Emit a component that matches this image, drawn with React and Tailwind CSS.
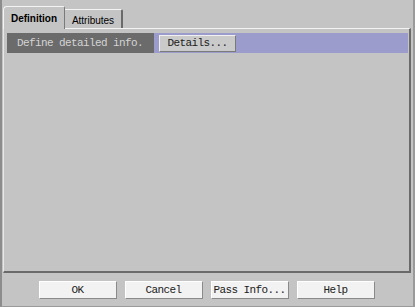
import React from "react";

const mono = { fontFamily: '"Liberation Mono", "DejaVu Sans Mono", monospace' };

function Btn({ children, className = "" }) {
  return (
    <button
      className={`h-[18px] flex items-center justify-center text-[11px] tracking-[-0.6px] text-[#202020] bg-[#f2f2f2] border border-t-[#ffffff] border-l-[#ffffff] border-r-[#8a8a8a] border-b-[#8a8a8a] ${className}`}
      style={mono}
    >
      {children}
    </button>
  );
}

export default function App() {
  return (
    <div
      className="w-[415px] h-[307px] bg-[#c4c4c4] border-l-2 border-l-[#8c8c8c] border-r-2 border-r-[#9a9a9a] border-b border-b-[#9a9a9a] flex flex-col"
      style={{ fontFamily: '"Liberation Sans", Arial, sans-serif' }}
    >
      {/* tabs */}
      <div className="flex items-end h-[28px] pl-[1px]">
        <div className="h-[23px] w-[62px] flex items-center justify-center pt-[1px] text-[10px] font-bold text-black bg-[#c4c4c4] border-t border-l border-t-[#f4f4f4] border-l-[#f4f4f4] border-r border-r-[#7a7a7a] rounded-tl-[4px] rounded-tr-[2px] relative z-10 -mb-px">
          Definition
        </div>
        <div className="h-[19px] w-[58px] flex items-center justify-center pt-[2px] text-[10px] text-black bg-[#c4c4c4] border-t border-t-[#f4f4f4] border-r-2 border-r-[#6a6a6a] rounded-tr-[2px]">
          Attributes
        </div>
      </div>

      {/* panel */}
      <div className="ml-[1px] mr-[2px] h-[245px] border-t border-l border-t-[#f4f4f4] border-l-[#e8e8e8] border-r-2 border-r-[#6a6a6a] border-b-2 border-b-[#6a6a6a] pt-[4px] pl-[3px] pr-[1px]">
        <div className="h-[20px] flex">
          <div
            className="w-[147px] bg-[#6b6b6b] text-[#d4d4d4] text-[11px] tracking-[-0.6px] flex items-center pl-[10px]"
            style={mono}
          >
            Define detailed info.
          </div>
          <div className="flex-1 bg-[#9c9ccc] flex items-center pl-[5px]">
            <button
              className="w-[77px] h-[17px] flex items-center justify-center text-[11px] tracking-[-0.6px] text-[#202020] bg-[#cacaca] border border-t-[#f0f0f0] border-l-[#f0f0f0] border-r-[#7a7a7a] border-b-[#7a7a7a]"
              style={mono}
            >
              Details...
            </button>
          </div>
        </div>
      </div>

      {/* footer buttons */}
      <div className="flex justify-center gap-[8px] pt-[8px] pr-[2px]">
        <Btn className="w-[78px]">OK</Btn>
        <Btn className="w-[78px]">Cancel</Btn>
        <Btn className="w-[78px]">Pass Info...</Btn>
        <Btn className="w-[78px]">Help</Btn>
      </div>
    </div>
  );
}
